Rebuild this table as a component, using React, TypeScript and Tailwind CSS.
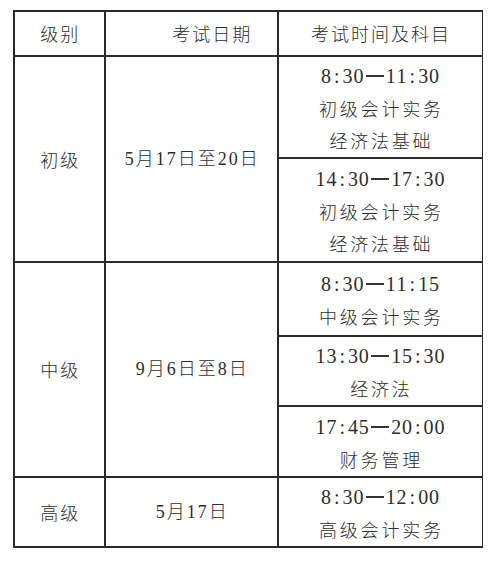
import React from "react";

function TimeLine({ text }: { text: string }) {
  return (
    <div className="flex justify-center h-[32px] items-center font-['Liberation_Serif',serif] text-[20px] leading-none">
      {text.split("").map((c, i) =>
        c === "—" ? (
          <span key={i} className="w-[21.6px] flex justify-center">
            <span className="w-[18px] h-[2px] bg-[#333] block" />
          </span>
        ) : (
          <span key={i} className="w-[10.8px] text-center inline-block">
            {c}
          </span>
        )
      )}
    </div>
  );
}

function Subj({ text }: { text: string }) {
  return (
    <div className="h-[32px] leading-[32px] text-[18px] tracking-[2.8px] pl-[2.8px] text-center">
      {text}
    </div>
  );
}

function TimeCell({ time, subjects }: { time: string; subjects: string[] }) {
  return (
    <div className="bg-white flex flex-col justify-center items-center">
      <div className="pt-[2px]">
        <TimeLine text={time} />
        {subjects.map((s, i) => (
          <Subj key={i} text={s} />
        ))}
      </div>
    </div>
  );
}

export default function App() {
  const plain = "bg-white flex items-center justify-center text-[18px] tracking-[2px] pl-[2px]";
  const date = plain + " font-['Liberation_Serif','Noto_Sans_CJK_SC',serif]";
  return (
    <div className="w-[500px] h-[565px] bg-white pt-[10px] pl-[13px] text-[#2e2e2e] font-['Noto_Sans_CJK_SC',sans-serif] font-light">
      <div className="w-[470px] grid grid-cols-[89.5px_171.5px_203px] grid-rows-[43px_100px_102px_72px_68px_69px_68px] gap-x-[1.5px] gap-y-[2px] bg-[#2a2a2a] px-[1.5px] py-[2px]">
        <div className={plain}>级别</div>
        <div className={plain + " tracking-[2.5px] !pl-[42px]"}>考试日期</div>
        <div className={plain + " tracking-[2.6px]"}>考试时间及科目</div>

        <div className={plain + " row-span-2"}>初级</div>
        <div className={date + " row-span-2"}>5月17日至20日</div>
        <TimeCell time="8:30—11:30" subjects={["初级会计实务", "经济法基础"]} />
        <TimeCell time="14:30—17:30" subjects={["初级会计实务", "经济法基础"]} />

        <div className={plain + " row-span-3"}>中级</div>
        <div className={date + " row-span-3"}>9月6日至8日</div>
        <TimeCell time="8:30—11:15" subjects={["中级会计实务"]} />
        <TimeCell time="13:30—15:30" subjects={["经济法"]} />
        <TimeCell time="17:45—20:00" subjects={["财务管理"]} />

        <div className={plain}>高级</div>
        <div className={date}>5月17日</div>
        <TimeCell time="8:30—12:00" subjects={["高级会计实务"]} />
      </div>
    </div>
  );
}
